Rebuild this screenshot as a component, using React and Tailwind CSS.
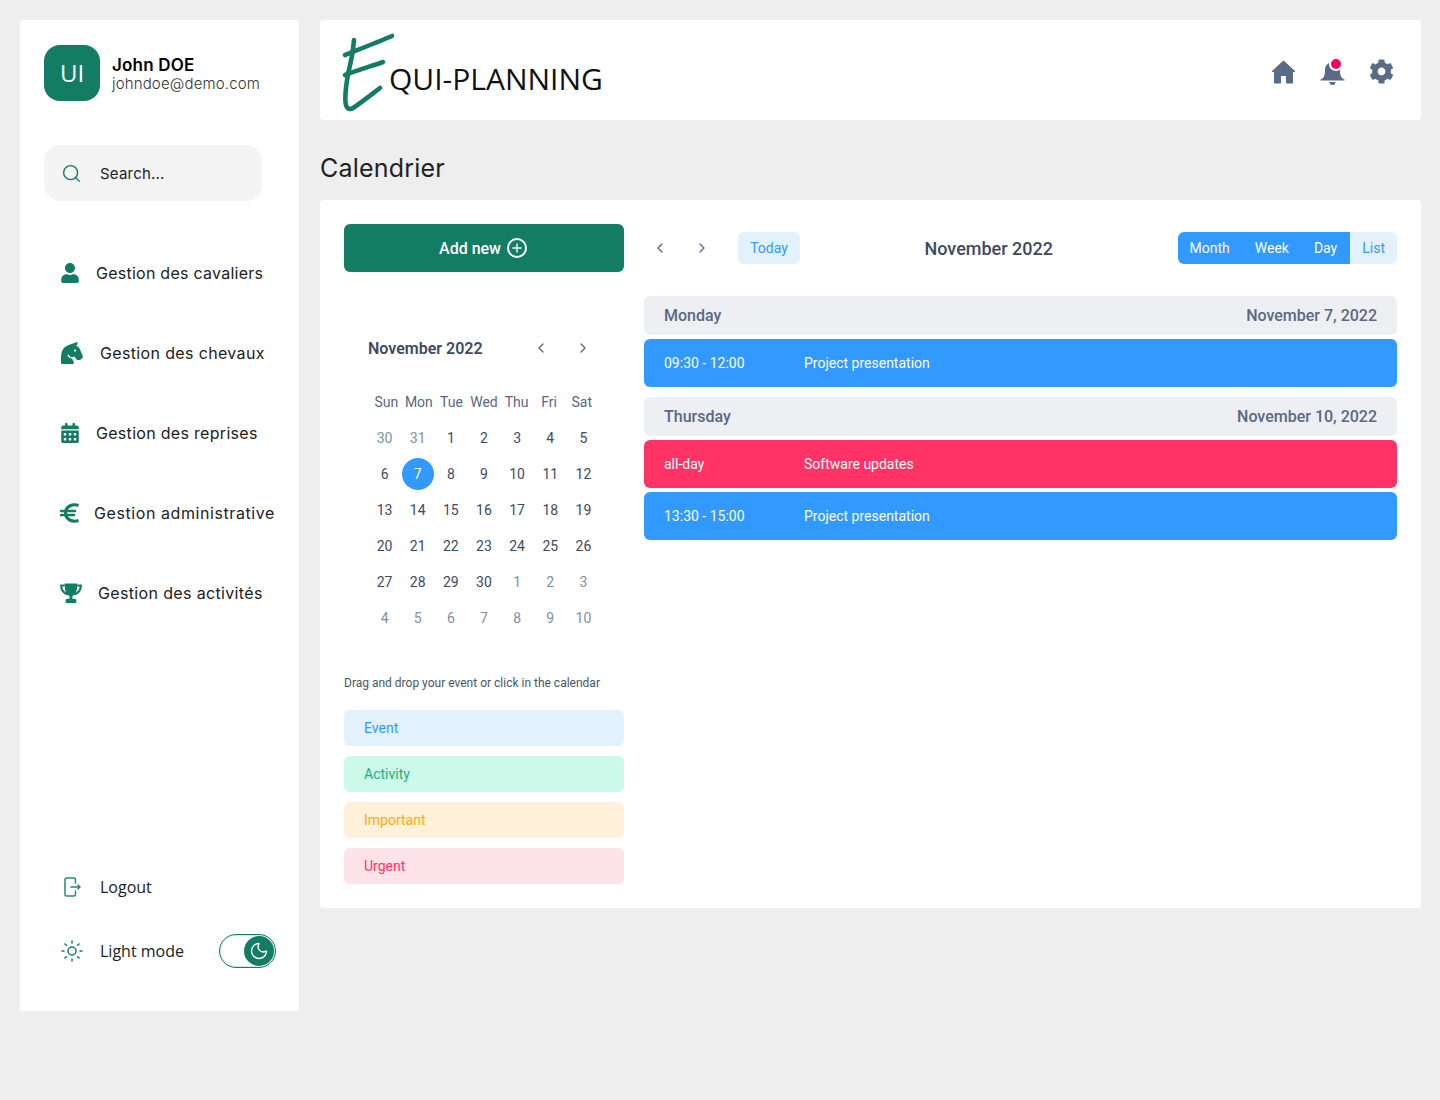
import React from "react";
import { FaUser, FaHorseHead, FaCalendarAlt, FaCog } from "react-icons/fa";
import { Search, Sun, Moon, ChevronLeft, ChevronRight, Plus } from "lucide-react";

const EuroIcon = () => (
  <svg width="20" height="20" viewBox="0 0 20 20" fill="none" stroke="currentColor" strokeWidth="3.2">
    <path d="M18.5 2.400C12.500 0.400 5.500 3.500 5.500 10C5.500 16.500 12.500 19.600 18.500 17.600" />
    <path d="M1 7.900H15M1 12.100H14" strokeWidth="2.500" strokeLinecap="round" />
  </svg>
);

const TrophyIcon = () => (
  <svg width="23" height="22" viewBox="0 0 23 22" fill="none">
    <path d="M5 1H18C18 7.500 17.300 12.500 13 14.200V17H15.500C16.500 17 17 18 17 19V21.500H6V19C6 18 6.500 17 7.500 17H10V14.200C5.700 12.500 5 7.500 5 1Z" fill="currentColor" />
    <path d="M5 3.200H1.200C1.200 7.500 3.500 11 8 12.500M18 3.200H21.800C21.800 7.500 19.500 11 15 12.500" stroke="currentColor" strokeWidth="2.200" />
  </svg>
);

const nav = [
  { icon: <FaUser size={20} />, label: "Gestion des cavaliers", w: "w-[20px]", gap: "ml-[16px]", track: "tracking-[0.25px]" },
  { icon: <FaHorseHead size={22} />, label: "Gestion des chevaux", w: "w-[24px]", gap: "ml-[16px]", track: "tracking-[0.35px]" },
  { icon: <FaCalendarAlt size={20} />, label: "Gestion des reprises", w: "w-[20px]", gap: "ml-[16px]", track: "tracking-[0.3px]" },
  { icon: <EuroIcon />, label: "Gestion administrative", w: "w-[20px]", gap: "ml-[14px]", track: "tracking-[0.58px]" },
  { icon: <TrophyIcon />, label: "Gestion des activités", w: "w-[22px]", gap: "ml-[16px]", track: "tracking-[0.35px]" },
];

const weeks = [
  [["30", 1], ["31", 1], ["1"], ["2"], ["3"], ["4"], ["5"]],
  [["6"], ["7"], ["8"], ["9"], ["10"], ["11"], ["12"]],
  [["13"], ["14"], ["15"], ["16"], ["17"], ["18"], ["19"]],
  [["20"], ["21"], ["22"], ["23"], ["24"], ["25"], ["26"]],
  [["27"], ["28"], ["29"], ["30"], ["1", 1], ["2", 1], ["3", 1]],
  [["4", 1], ["5", 1], ["6", 1], ["7", 1], ["8", 1], ["9", 1], ["10", 1]],
];

function DayHeader({ day, date }) {
  return (
    <div className="h-[39px] rounded-md bg-[#eeeff3] px-[20px] flex items-center justify-between text-[16px] font-medium text-[#5a6882]">
      <span>{day}</span>
      <span>{date}</span>
    </div>
  );
}

function Event({ time, title, color }) {
  return (
    <div className={`h-[48px] rounded-md ${color} px-[20px] flex items-center text-[14px] text-white`}>
      <span className="w-[140px]">{time}</span>
      <span>{title}</span>
    </div>
  );
}

function Tag({ label, cls }) {
  return <div className={`h-[36px] rounded-md px-[20px] flex items-center text-[14px] ${cls}`}>{label}</div>;
}

export default function App() {
  return (
    <div className="min-h-[1100px] bg-[#eeeeee] p-[20px] flex gap-[21px] items-start">
      <aside className="w-[279px] h-[991px] shrink-0 bg-white rounded-t-[4px] pt-[25px] flex flex-col font-['Inter',sans-serif]">
        <div className="flex items-center pl-[24px]">
          <div className="w-[56px] h-[56px] rounded-2xl bg-[#137c64] text-white flex items-center justify-center text-[24px] font-['Open_Sans',sans-serif]">UI</div>
          <div className="ml-[12px] pt-[1px] text-black">
            <div className="text-[17px] leading-[20px] font-semibold tracking-[0.2px]">John DOE</div>
            <div className="text-[15px] leading-[18px] text-[#333] font-light tracking-[0.15px]">johndoe@demo.com</div>
          </div>
        </div>
        <div className="ml-[24px] mt-[44px] w-[218px] h-[56px] rounded-2xl bg-[#f4f4f4] flex items-center pl-[17px]">
          <Search size={21} strokeWidth={1.6} className="text-[#137c64]" />
          <span className="ml-[18px] pt-[2px] text-[15px] tracking-[0.2px] text-[#222]">Search...</span>
        </div>
        <nav className="mt-[32px] pl-[40px]">
          {nav.map((n) => (
            <div key={n.label} className="h-[80px] flex items-center">
              <span className={`${n.w} flex justify-center text-[#137c64]`}>{n.icon}</span>
              <span className={`${n.gap} ${n.track} text-[16px] font-normal text-[#222]`}>{n.label}</span>
            </div>
          ))}
        </nav>
        <div className="mt-auto pb-[44px] font-['Open_Sans',sans-serif] text-[16px] text-[#222]">
          <div className="h-[32px] flex items-center pl-[40px]">
            <svg width="24" height="24" viewBox="0 0 24 24" fill="none" stroke="#137c64" strokeWidth="1.5" strokeLinecap="round" strokeLinejoin="round" className="opacity-90">
              <path d="M15.5 8V4.5a1.5 1.5 0 0 0-1.5-1.5H6.5A1.5 1.5 0 0 0 5 4.5v15A1.5 1.5 0 0 0 6.5 21H14a1.5 1.5 0 0 0 1.5-1.5V16" />
              <path d="M11 12h9M18 10l2 2-2 2" />
            </svg>
            <span className="ml-[16px]">Logout</span>
          </div>
          <div className="mt-[32px] h-[32px] flex items-center pl-[40px]">
            <Sun size={24} strokeWidth={1.5} className="text-[#137c64]" />
            <span className="ml-[16px]">Light mode</span>
            <div className="ml-[35px] w-[57px] h-[34px] rounded-full border border-[#137c64] flex items-center justify-end pr-[1px] shadow-[inset_0_0_0_1px_#d8e8e4]">
              <div className="w-[30px] h-[30px] rounded-full bg-[#137c64] flex items-center justify-center">
                <Moon size={20} strokeWidth={1.6} className="text-white" />
              </div>
            </div>
          </div>
        </div>
      </aside>

      <main className="w-[1101px] shrink-0 font-['Roboto',sans-serif]">
        <header className="h-[100px] bg-white rounded-[4px] flex items-center justify-between pl-[20px] pr-[27px]">
          <div className="flex items-start h-[100px]">
            <svg width="60" height="85" viewBox="0 0 60 85" fill="none" stroke="#137c64" strokeWidth="4.6" strokeLinecap="round" strokeLinejoin="round" className="mt-[12px]">
              <path d="M14 8C13 20 11 30 8 42C6 54 4 66 6 73C7 77 10 78 13 76C22 70 32 62 40 56" />
              <path d="M5 23C20 17 38 10 52 4" />
              <path d="M5 43C18 38 32 34 43 30" />
            </svg>
            <span className="-ml-[11px] mt-[38px] text-[30px] leading-[42px] font-['Open_Sans',sans-serif] text-[#111]">QUI-PLANNING</span>
          </div>
          <div className="flex items-center gap-[24px] pt-[3px] text-[#5a6b88]">
            <svg width="25" height="24" viewBox="0 0 25 24" fill="currentColor" stroke="currentColor" strokeWidth="1" strokeLinejoin="round">
              <path fillRule="evenodd" d="M12.500 1L1 11.500H3.500V23H9.500V15.500H15.500V23H21.500V11.500H24Z" />
            </svg>
            <span className="relative block">
              <svg width="25" height="26" viewBox="0 0 25 26" fill="currentColor" className="block">
                <path d="M12.5 1.5a1.8 1.8 0 0 1 1.8 1.9C18 4.2 20 7.5 20 11c0 4 .6 6.4 2 8 .7.7 1.6 1.2 2.5 1.5v.9H.5v-.9C1.4 20.2 2.300 19.700 3 19c1.400-1.600 2-4 2-8 0-3.500 2-6.800 5.700-7.600a1.800 1.800 0 0 1 1.800-1.900Z" />
                <path d="M9.500 23h6a3 3 0 0 1-6 0Z" />
              </svg>
              <span className="absolute -top-[2px] right-[2px] w-[14px] h-[14px] rounded-full bg-[#f2055c] border-2 border-white" />
            </span>
            <FaCog size={25} />
          </div>
        </header>

        <h1 className="mt-[28px] h-[40px] leading-[40px] text-[25px] text-[#222] font-['Inter',sans-serif] font-normal tracking-[0.2px]">Calendrier</h1>

        <section className="mt-[12px] bg-white rounded-[4px] p-[24px] flex gap-[20px] text-[#3f4a5f]">
          <div className="w-[280px] shrink-0">
            <button className="w-full h-[48px] rounded-md bg-[#137c64] text-white text-[16px] font-medium flex items-center justify-center gap-[6px] pr-[2px]">
              <span className="pt-[1px]">Add new</span>
              <span className="w-[20px] h-[20px] rounded-full border-2 border-white flex items-center justify-center"><Plus size={14} strokeWidth={2.4} /></span>
            </button>

            <div className="mt-[64px] h-[24px] flex items-center pl-[24px] text-[16px] font-semibold text-[#3f4a5f]">
              <span className="pt-[1px]">November 2022</span>
              <ChevronLeft size={16} strokeWidth={2} className="ml-[50px] text-[#5a6882]" />
              <ChevronRight size={16} strokeWidth={2} className="ml-[26px] text-[#5a6882]" />
            </div>

            <div className="mt-[24px] ml-[26px] w-[228px] grid grid-cols-7 text-[14px] text-[#5a6882] h-[36px] items-center leading-[36px]">
              {["Sun", "Mon", "Tue", "Wed", "Thu", "Fri", "Sat"].map((d) => (
                <div key={d} className="text-center">{d}</div>
              ))}
            </div>
            <div className="ml-[24px] w-[232px] grid grid-cols-7 text-[14px]">
              {weeks.flat().map(([d, muted], i) => (
                <div key={i} className="h-[36px] flex items-center justify-center">
                  <span className={d === "7" && !muted ? "w-[32px] h-[32px] rounded-full bg-[#3199ff] text-white flex items-center justify-center" : muted ? "text-[#7f8ea6]" : "text-[#3f4a5f]"}>{d}</span>
                </div>
              ))}
            </div>

            <p className="mt-[37px] h-[20px] leading-[20px] text-[12px] text-[#4a5568]">Drag and drop your event or click in the calendar</p>
            <div className="mt-[17px] flex flex-col gap-[10px]">
              <Tag label="Event" cls="bg-[#e3f1fd] text-[#3199ff]" />
              <Tag label="Activity" cls="bg-[#ccf9ea] text-[#11b67e]" />
              <Tag label="Important" cls="bg-[#fff0d9] text-[#ffab10]" />
              <Tag label="Urgent" cls="bg-[#ffe3ea] text-[#ff3366]" />
            </div>
          </div>

          <div className="flex-1 min-w-0">
            <div className="h-[48px] flex items-center">
              <ChevronLeft size={16} strokeWidth={2} className="ml-[8px] text-[#5a6882]" />
              <ChevronRight size={16} strokeWidth={2} className="ml-[26px] text-[#5a6882]" />
              <span className="ml-[28px] w-[62px] h-[32px] rounded-md bg-[#e3f1fd] text-[#3199ff] text-[14px] flex items-center justify-center">Today</span>
              <span className="flex-1 text-center text-[18px] font-medium text-[#3f4a5f]">November 2022</span>
              <div className="h-[32px] rounded-md overflow-hidden flex text-[14px]">
                <div className="bg-[#3199ff] text-white flex items-center pl-[12px] pr-[13px] gap-[25px]">
                  <span>Month</span><span>Week</span><span>Day</span>
                </div>
                <div className="bg-[#e3f1fd] text-[#3199ff] flex items-center px-[12px]">List</div>
              </div>
            </div>
            <div className="mt-[24px]">
              <DayHeader day="Monday" date="November 7, 2022" />
              <div className="mt-[4px]"><Event time="09:30 - 12:00" title="Project presentation" color="bg-[#3199ff]" /></div>
              <div className="mt-[10px]"><DayHeader day="Thursday" date="November 10, 2022" /></div>
              <div className="mt-[4px]"><Event time="all-day" title="Software updates" color="bg-[#ff3366]" /></div>
              <div className="mt-[4px]"><Event time="13:30 - 15:00" title="Project presentation" color="bg-[#3199ff]" /></div>
            </div>
          </div>
        </section>
      </main>
    </div>
  );
}
